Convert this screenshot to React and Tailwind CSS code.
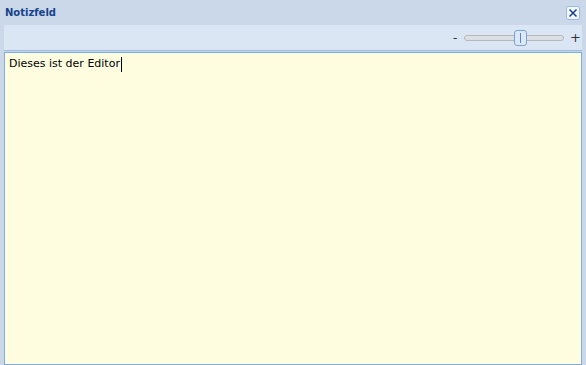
import { useState } from "react"

function CloseButton() {
    return (
        <button className="flex h-[14px] w-[14px] items-center justify-center rounded-[2px] border border-[#99bbe8] bg-[#f3f7fc]">
            <svg width="10" height="10" viewBox="0 0 10 10">
                <path d="M1.5 1.5 L8.5 8.5 M8.5 1.5 L1.5 8.5" stroke="#15428b" strokeWidth="1.5" />
            </svg>
        </button>
    )
}

function ZoomSlider({ value }) {
    return (
        <div className="flex items-center">
            <span className="w-[11px] text-[12px] leading-none text-[#333]">-</span>
            <div className="relative h-[16px] w-[100px]">
                {/* track */}
                <div className="absolute left-0 right-0 top-[5px] h-[6px] rounded-full border border-[#b5b8bd] bg-[#dcdfe3]" />
                {/* thumb */}
                <div
                    className="absolute top-0 flex h-[16px] w-[13px] items-center justify-center rounded-[3px] border border-[#7da2ce] bg-[#dbe8f7]"
                    style={{ left: value }}
                >
                    <div className="h-[10px] w-[1px] bg-[#5b86bf]" />
                </div>
            </div>
            <span className="ml-[6px] text-[13px] leading-none text-[#333]">+</span>
        </div>
    )
}

export default function App() {
    const [text] = useState("Dieses ist der Editor")

    return (
        <div
            className="flex h-[365px] w-[586px] flex-col bg-[#cbd8e9] px-[4px]"
            style={{ fontFamily: "Tahoma, 'DejaVu Sans', Verdana, sans-serif" }}
        >
            {/* Title bar */}
            <div className="flex h-[25px] items-center justify-between pl-[1px] pr-[2px]">
                <span className="text-[10px] font-bold text-[#15428b]">Notizfeld</span>
                <CloseButton />
            </div>
            {/* Toolbar */}
            <div className="flex h-[26px] items-center justify-end border-b border-[#99bbe8] bg-[#dae6f4] pr-[1px]">
                <ZoomSlider value={50} />
            </div>
            {/* Editor */}
            <div className="mt-[1px] flex-1 border border-[#7eadd9] bg-[#fefde0] px-[4px] pt-[3px]">
                <p className="text-[11px] leading-[16px] text-black">
                    {text}
                    <span className="ml-[1px] inline-block h-[15px] w-[1px] align-middle bg-black" />
                </p>
            </div>
        </div>
    )
}
